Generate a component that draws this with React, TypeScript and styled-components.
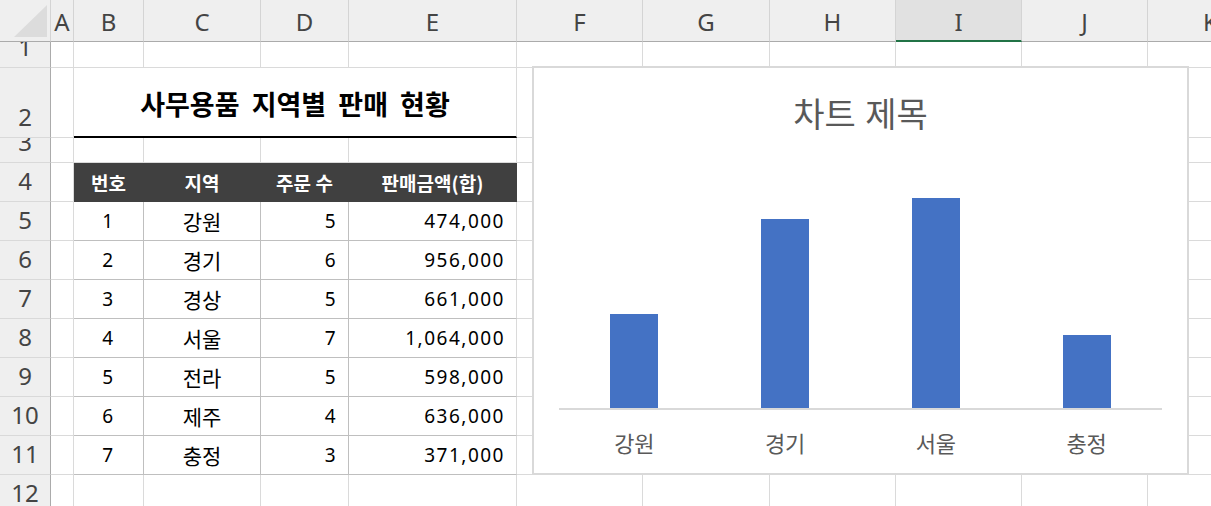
import React from 'react';
import styled, { createGlobalStyle, css } from 'styled-components';

const GlobalStyle = createGlobalStyle`
  html, body {
    margin: 0;
    padding: 0;
    background: #ffffff;
    overflow: hidden;
  }
  body {
    font-family: 'Noto Sans', 'Noto Sans CJK KR', sans-serif;
  }
`;

const COLUMNS = ['A', 'B', 'C', 'D', 'E', 'F', 'G', 'H', 'I', 'J', 'K'];
const COLUMN_WIDTHS = [51, 23, 70, 117, 88, 168, 126, 127, 126, 126, 126, 126];
const ROW_HEIGHTS = [42, 26, 70, 25, 39, 39, 39, 39, 39, 39, 39, 39, 39];
const ACTIVE_COLUMN = 'I';

const HEADERS = ['번호', '지역', '주문 수', '판매금액(합)'];

const SALES = [
  { no: '1', region: '강원', orders: '5', amount: '474,000' },
  { no: '2', region: '경기', orders: '6', amount: '956,000' },
  { no: '3', region: '경상', orders: '5', amount: '661,000' },
  { no: '4', region: '서울', orders: '7', amount: '1,064,000' },
  { no: '5', region: '전라', orders: '5', amount: '598,000' },
  { no: '6', region: '제주', orders: '4', amount: '636,000' },
  { no: '7', region: '충정', orders: '3', amount: '371,000' },
];

const CHART_DATA = [
  { label: '강원', value: 474000 },
  { label: '경기', value: 956000 },
  { label: '서울', value: 1064000 },
  { label: '충정', value: 371000 },
];
const CHART_MAX = 1200000;
const PLOT_HEIGHT = 240;

const GRID = '#dadada';
const TABLE_LINE = '#bfbfbf';
const HEAD_FILL = '#404040';
const CJK = "'Noto Sans CJK KR', 'Noto Sans', sans-serif";

const Sheet = styled.div`
  position: relative;
  display: grid;
  grid-template-columns: ${COLUMN_WIDTHS.map((w) => `${w}px`).join(' ')};
  grid-template-rows: ${ROW_HEIGHTS.map((h) => `${h}px`).join(' ')};
  width: 1211px;
  height: 506px;
  overflow: hidden;
`;

const Corner = styled.div`
  position: relative;
  box-sizing: border-box;
  background: #efefef;
  border-right: 1px solid #d4d4d4;
  border-bottom: 1px solid #ababab;

  &::after {
    content: '';
    position: absolute;
    left: 14px;
    top: 5px;
    width: 33px;
    height: 32px;
    background: #dcdcdc;
    clip-path: polygon(100% 0, 100% 100%, 0 100%);
  }
`;

const headerText = css`
  box-sizing: border-box;
  display: flex;
  justify-content: center;
  align-items: flex-end;
  overflow: hidden;
  background: #efefef;
  color: #444444;
  font-family: 'Noto Sans', sans-serif;
  font-size: 24px;
  line-height: 24px;
`;

const ColHead = styled.div<{ $active?: boolean }>`
  ${headerText};
  padding-bottom: 7px;
  border-right: 1px solid #d4d4d4;
  border-bottom: 1px solid #ababab;

  ${({ $active }) =>
    $active &&
    css`
      background: #e1e1e1;
      border-bottom: 2px solid #217346;
      padding-bottom: 6px;
    `}
`;

const RowHead = styled.div`
  ${headerText};
  padding-bottom: 8px;
  border-right: 1px solid #ababab;
  border-bottom: 1px solid #d9d9d9;
`;

const Cell = styled.div<{
  $tone?: 'plain' | 'head' | 'data';
  $align?: 'center' | 'right';
  $edge?: boolean;
  $hangul?: boolean;
}>`
  box-sizing: border-box;
  display: flex;
  align-items: center;
  justify-content: ${({ $align }) => ($align === 'right' ? 'flex-end' : 'center')};
  padding-right: ${({ $align }) => ($align === 'right' ? '11px' : '0')};
  border-right: 1px solid ${GRID};
  border-bottom: 1px solid ${GRID};
  background: #ffffff;
  color: #000000;
  white-space: nowrap;

  ${({ $tone, $edge, $hangul }) => {
    if ($tone === 'head') {
      return css`
        background: ${HEAD_FILL};
        border-color: ${HEAD_FILL};
        color: #ffffff;
        font-family: ${CJK};
        font-weight: 700;
        font-size: 19px;
      `;
    }
    if ($tone === 'data') {
      return css`
        border-bottom-color: ${TABLE_LINE};
        border-right-color: ${$edge ? GRID : TABLE_LINE};
        font-family: ${$hangul ? CJK : "'Noto Sans', sans-serif"};
        font-size: ${$hangul ? '21px' : '19px'};
        letter-spacing: ${$hangul ? '0' : '1.5px'};
      `;
    }
    return css``;
  }}
`;

const TitleCell = styled.div`
  grid-column: span 4;
  box-sizing: border-box;
  display: flex;
  align-items: center;
  justify-content: center;
  padding-top: 3px;
  border-right: 1px solid ${GRID};
  border-bottom: 2px solid #000000;
  font-family: ${CJK};
  font-weight: 700;
  font-size: 27px;
  word-spacing: 6px;
  color: #000000;
`;

const ChartFrame = styled.div`
  position: absolute;
  left: 532px;
  top: 66px;
  width: 657px;
  height: 409px;
  box-sizing: border-box;
  display: flex;
  flex-direction: column;
  padding: 0 25px;
  border: 2px solid #d9d9d9;
  background: #ffffff;
  color: #595959;
  font-family: ${CJK};
`;

const ChartTitle = styled.div`
  box-sizing: border-box;
  height: 100px;
  padding-top: 23px;
  text-align: center;
  font-size: 34px;
  line-height: 44px;
  word-spacing: 2px;
`;

const Plot = styled.div`
  display: grid;
  grid-template-columns: repeat(4, 1fr);
  height: ${PLOT_HEIGHT}px;
`;

const Slot = styled.div`
  display: flex;
  align-items: flex-end;
  justify-content: center;
`;

const Bar = styled.div`
  width: 48px;
  background: #4472c4;
`;

const Axis = styled.div`
  height: 2px;
  background: #d9d9d9;
`;

const Labels = styled.div`
  display: grid;
  grid-template-columns: repeat(4, 1fr);
  margin-top: 17px;
`;

const Label = styled.div`
  text-align: center;
  font-size: 22px;
  line-height: 30px;
`;

const PlainCells = ({ count, row }: { count: number; row: number }) => (
  <>
    {Array.from({ length: count }, (_, i) => (
      <Cell key={`p-${row}-${i}`} $tone="plain" />
    ))}
  </>
);

const App = () => {
  return (
    <>
      <GlobalStyle />
      <Sheet>
        <Corner />
        {COLUMNS.map((col) => (
          <ColHead key={col} $active={col === ACTIVE_COLUMN}>
            {col}
          </ColHead>
        ))}

        <RowHead>1</RowHead>
        <PlainCells count={11} row={1} />

        <RowHead>2</RowHead>
        <Cell $tone="plain" />
        <TitleCell>사무용품 지역별 판매 현황</TitleCell>
        <PlainCells count={6} row={2} />

        <RowHead>3</RowHead>
        <PlainCells count={11} row={3} />

        <RowHead>4</RowHead>
        <Cell $tone="plain" />
        {HEADERS.map((h) => (
          <Cell key={h} $tone="head">
            {h}
          </Cell>
        ))}
        <PlainCells count={6} row={4} />

        {SALES.map((s, i) => (
          <React.Fragment key={s.no}>
            <RowHead>{i + 5}</RowHead>
            <Cell $tone="plain" />
            <Cell $tone="data">{s.no}</Cell>
            <Cell $tone="data" $hangul>
              {s.region}
            </Cell>
            <Cell $tone="data" $align="right">
              {s.orders}
            </Cell>
            <Cell $tone="data" $align="right" $edge>
              {s.amount}
            </Cell>
            <PlainCells count={6} row={i + 5} />
          </React.Fragment>
        ))}

        <RowHead>12</RowHead>
        <PlainCells count={11} row={12} />

        <ChartFrame>
          <ChartTitle>차트 제목</ChartTitle>
          <Plot>
            {CHART_DATA.map((d) => (
              <Slot key={d.label}>
                <Bar style={{ height: (d.value / CHART_MAX) * 237 }} />
              </Slot>
            ))}
          </Plot>
          <Axis />
          <Labels>
            {CHART_DATA.map((d) => (
              <Label key={d.label}>{d.label}</Label>
            ))}
          </Labels>
        </ChartFrame>
      </Sheet>
    </>
  );
};

export default App;
